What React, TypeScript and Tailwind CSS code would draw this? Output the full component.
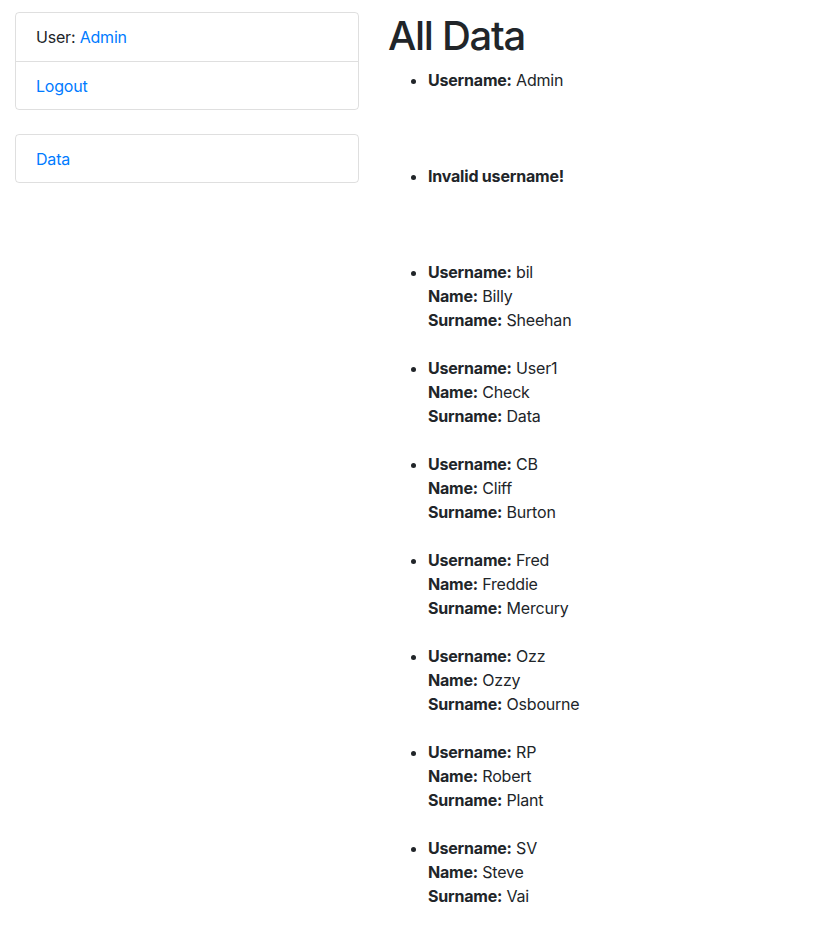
import React from "react";

type Person = { username: string; name: string; surname: string };

const people: Person[] = [
  { username: "bil", name: "Billy", surname: "Sheehan" },
  { username: "User1", name: "Check", surname: "Data" },
  { username: "CB", name: "Cliff", surname: "Burton" },
  { username: "Fred", name: "Freddie", surname: "Mercury" },
  { username: "Ozz", name: "Ozzy", surname: "Osbourne" },
  { username: "RP", name: "Robert", surname: "Plant" },
  { username: "SV", name: "Steve", surname: "Vai" },
];

export default function App() {
  return (
    <div
      className="min-h-[933px] w-full bg-white text-[16px] leading-[24px] tracking-[-0.2px] text-[#212529]"
      style={{ fontFamily: "Inter, 'Noto Sans', 'Liberation Sans', sans-serif" }}
    >
      <div className="flex pt-[12px]">
        <div className="w-[374px] shrink-0 px-[15px]">
          <div className="flex flex-col rounded-[4px] border border-[rgba(0,0,0,0.125)]">
            <div className="px-[20px] py-[12px]">
              User: <a className="text-[#007bff]" href="#">Admin</a>
            </div>
            <div className="border-t border-[rgba(0,0,0,0.125)] px-[20px] pt-[12px] pb-[11px]">
              <a className="text-[#007bff]" href="#">Logout</a>
            </div>
          </div>
          <div className="mt-[24px] flex flex-col rounded-[4px] border border-[rgba(0,0,0,0.125)]">
            <div className="px-[20px] pt-[12px] pb-[11px]">
              <a className="text-[#007bff]" href="#">Data</a>
            </div>
          </div>
        </div>
        <div className="flex-1 px-[14px]">
          <h1 className="mb-[8px] text-[40px] font-medium leading-[48px] tracking-[-1.3px]">All Data</h1>
          <ul className="list-disc pl-[40px]">
            <li className="h-[96px]">
              <b>Username:</b> Admin
            </li>
            <li className="h-[96px]">
              <b>Invalid username!</b>
            </li>
            {people.map((p) => (
              <li key={p.username} className="h-[96px]">
                <b>Username:</b> {p.username}
                <br />
                <b>Name:</b> {p.name}
                <br />
                <b>Surname:</b> {p.surname}
              </li>
            ))}
          </ul>
        </div>
      </div>
    </div>
  );
}
